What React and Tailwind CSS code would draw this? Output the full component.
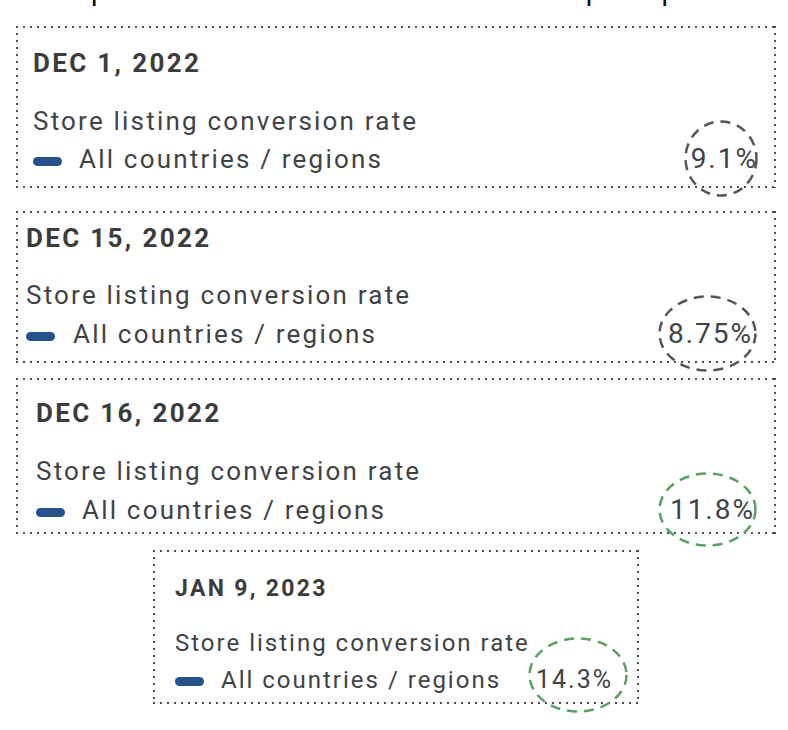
import React from "react";

const dotted =
  "[background-image:repeating-linear-gradient(90deg,#4d4d4d_0_2px,transparent_2px_7px),repeating-linear-gradient(90deg,#4d4d4d_0_2px,transparent_2px_7px),repeating-linear-gradient(180deg,#4d4d4d_0_2px,transparent_2px_7px),repeating-linear-gradient(180deg,#4d4d4d_0_2px,transparent_2px_7px)] [background-size:100%_2px,100%_2px,2px_100%,2px_100%] [background-position:0_0,0_100%,0_0,100%_0] bg-no-repeat";

function Ellipse({ w, h, color, className }) {
  return (
    <svg
      width={w}
      height={h}
      className={"absolute pointer-events-none " + className}
      viewBox={`0 0 ${w} ${h}`}
    >
      <ellipse
        cx={w / 2}
        cy={h / 2}
        rx={w / 2 - 1.5}
        ry={h / 2 - 1.5}
        fill="none"
        stroke={color}
        strokeWidth="2.5"
        strokeDasharray="10 7"
      />
    </svg>
  );
}

function Bar({ className }) {
  return (
    <span
      className={
        "inline-block align-middle h-[9px] w-[29px] rounded-full bg-[#24528a] " +
        className
      }
    />
  );
}

export default function App() {
  return (
    <div
      className="w-[788px] h-[730px] bg-white overflow-hidden text-[#404346]"
      style={{ fontFamily: "Roboto, 'Liberation Sans', sans-serif" }}
    >
      {/* cut-off line above */}
      <div className="h-[8px] overflow-hidden">
        <div className="flex -mt-[25px] text-[28px] leading-[32px] text-black">
          <span className="ml-[91px]">p</span>
          <span className="ml-[479px]">p</span>
          <span className="ml-[60px]">p</span>
        </div>
      </div>

      {/* Box 1 */}
      <div className={"mt-[18px] ml-[16px] w-[760px] pt-[22px] pb-[14px] pl-[17px] pr-[18px] " + dotted}>
        <div className="text-[26px] leading-[30px] font-bold tracking-[0.09em] text-[#3c3c3c]">
          DEC 1, 2022
        </div>
        <div className="mt-[28px] text-[26px] leading-[30px] tracking-[2.2px]">Store listing conversion rate</div>
        <div className="mt-[8px] flex items-baseline justify-between text-[26px] leading-[30px] tracking-[2.2px]">
          <span>
            <Bar className="mr-[17px]" />
            All countries / regions
          </span>
          <span className="relative text-[28px] tracking-[2px]">
            9.1%
            <Ellipse w={74} h={77} color="#555555" className="right-[0px] top-[-24px]" />
          </span>
        </div>
      </div>

      {/* Box 2 */}
      <div className={"mt-[23px] ml-[16px] w-[760px] pt-[12px] pb-[14px] pl-[10px] pr-[23px] " + dotted}>
        <div className="text-[26px] leading-[30px] font-bold tracking-[0.09em] text-[#3c3c3c]">
          DEC 15, 2022
        </div>
        <div className="mt-[27px] text-[26px] leading-[30px] tracking-[2.2px]">Store listing conversion rate</div>
        <div className="mt-[9px] flex items-baseline justify-between text-[26px] leading-[30px] tracking-[2.2px]">
          <span>
            <Bar className="mr-[18px]" />
            All countries / regions
          </span>
          <span className="relative text-[28px] tracking-[2px]">
            8.75%
            <Ellipse w={99} h={77} color="#555555" className="right-[-4px] top-[-24px]" />
          </span>
        </div>
      </div>

      {/* Box 3 */}
      <div className={"mt-[15px] ml-[16px] w-[760px] pt-[20px] pb-[9px] pl-[20px] pr-[21px] " + dotted}>
        <div className="text-[26px] leading-[30px] font-bold tracking-[0.09em] text-[#3c3c3c]">
          DEC 16, 2022
        </div>
        <div className="mt-[28px] text-[26px] leading-[30px] tracking-[2.2px]">Store listing conversion rate</div>
        <div className="mt-[9px] flex items-baseline justify-between text-[26px] leading-[30px] tracking-[2.2px]">
          <span>
            <Bar className="mr-[17px]" />
            All countries / regions
          </span>
          <span className="relative text-[28px] tracking-[2px]">
            11.8%
            <Ellipse w={99} h={75} color="#5aa05f" className="right-[-2px] top-[-23px]" />
          </span>
        </div>
      </div>

      {/* Box 4 */}
      <div className={"mt-[16px] ml-[153px] w-[486px] pt-[25px] pb-[10px] pl-[22px] pr-[26px] " + dotted}>
        <div className="text-[23px] leading-[28px] font-bold tracking-[0.1em] text-[#3c3c3c]">
          JAN 9, 2023
        </div>
        <div className="mt-[26px] text-[24px] leading-[28px] tracking-[2px]">Store listing conversion rate</div>
        <div className="mt-[9px] flex items-baseline justify-between text-[24px] leading-[28px] tracking-[2px]">
          <span>
            <Bar className="mr-[17px] h-[8px] w-[28px]" />
            All countries / regions
          </span>
          <span className="relative text-[25px] tracking-[2px]">
            14.3%
            <Ellipse w={100} h={76} color="#5aa05f" className="right-[-15px] top-[-29px]" />
          </span>
        </div>
      </div>
    </div>
  );
}
